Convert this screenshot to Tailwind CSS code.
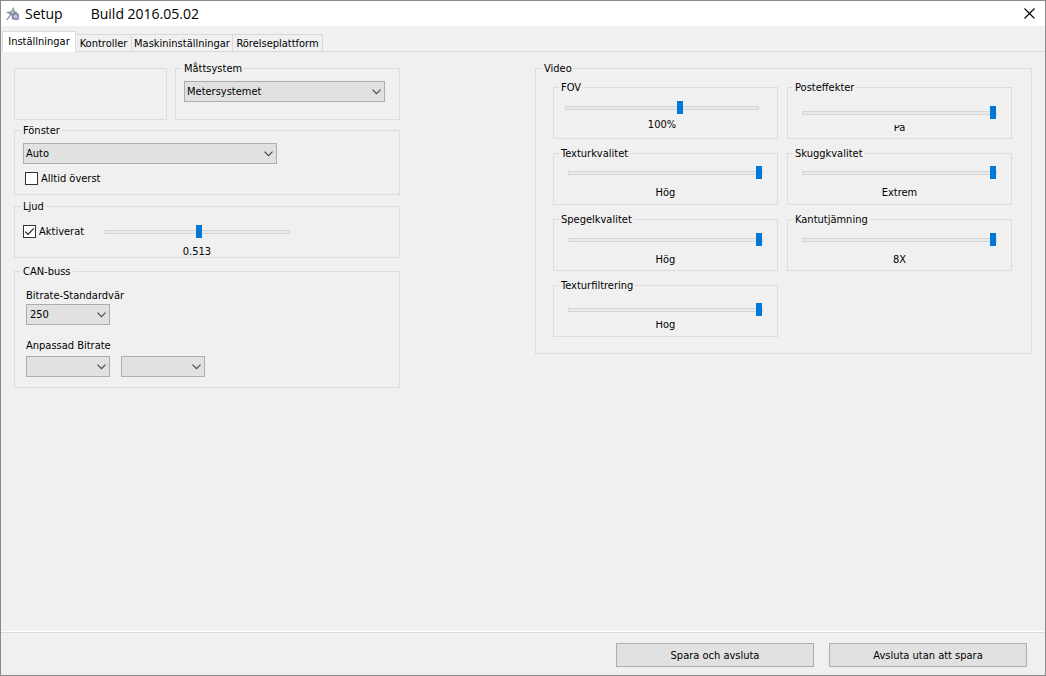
<!DOCTYPE html>
<html lang="sv">
<head>
<meta charset="utf-8">
<title>Setup</title>
<script src="https://cdn.jsdelivr.net/npm/@tailwindcss/browser@4"></script>
</head>
<body class="flex min-h-screen flex-col border border-[#8a8a8a] bg-[#f0f0f0] font-['DejaVu_Sans_Condensed','DejaVu_Sans',sans-serif] text-[11px] leading-[13px] text-black">
<svg class="hidden"><symbol id="chev" viewBox="0 0 9 6"><path d="M.5 .7 4.5 4.7 8.5 .7" fill="none" stroke="#444" stroke-width="1.1"/></symbol></svg>

<header class="flex h-[25px] items-center bg-white pl-1 pr-2 font-['Open_Sans',sans-serif] text-[14px] leading-5">
  <svg class="size-4" viewBox="0 0 16 16" fill="none" aria-hidden="true">
    <path d="M1 6 6.3 5.2 8.3.8 9.8 5.2 12.6 6 10.2 8 11.8 14 9.6 13 8.2 9.2 5.8 9.8 2 14.6 1.2 13.8 5 8.6z" fill="#8d919b"/>
    <path d="M7.6 3.8 6.8 7.8 8.6 7.4z" fill="#d5d8de"/>
    <circle cx="10.4" cy="10.4" r="2.7" fill="#c3cbe0" stroke="#7683a8" stroke-width="1.5"/>
    <path d="M12.3 12.3 14 13.8M6.5 11.5 8.2 13.2M12.8 8.4 13.8 7.8" stroke="#8a93aa" stroke-width="1.2"/>
  </svg>
  <h1 class="ml-1">Setup</h1>
  <span class="ml-7">Build 2016.05.02</span>
  <button aria-label="Stäng" class="ml-auto grid size-4 place-items-center"><svg class="size-[11px]" viewBox="0 0 11 11"><path d="M.5.5l10 10M10.5.5l-10 10" stroke="#000" stroke-width="1.1"/></svg></button>
</header>

<nav role="tablist" class="flex items-end pl-px pt-[5px]">
  <button role="tab" aria-selected="true" class="h-[21px] w-[74px] shrink-0 border-x border-t border-[#dcdcdc] bg-white pb-0.5 whitespace-nowrap">Inställningar</button>
  <button role="tab" class="h-[18px] w-14 shrink-0 border-y border-r border-[#d9d9d9] whitespace-nowrap">Kontroller</button>
  <button role="tab" class="h-[18px] w-[101px] shrink-0 border-y border-r border-[#d9d9d9] whitespace-nowrap">Maskininställningar</button>
  <button role="tab" class="h-[18px] w-[90px] shrink-0 border-y border-r border-[#d9d9d9] whitespace-nowrap">Rörelseplattform</button>
  <span class="grow border-b border-[#d9d9d9]"></span>
</nav>

<main class="flex grow items-start justify-between gap-4 pb-4 pl-[13px] pr-[13px] pt-[10px]">
  <div class="w-[386px] shrink-0">
    <div class="flex gap-2">
      <div class="mt-1.5 w-[153px] border border-[#dcdcdc]"></div>
      <fieldset class="h-[58px] grow border border-[#dcdcdc] px-2">
        <legend class="-ml-0.5 px-0.5"><label for="unit">Måttsystem</label></legend>
        <div class="relative mt-1.5 w-[201px]">
          <select id="unit" class="block h-[21px] w-full appearance-none border border-[#adadad] bg-[#e1e1e1] px-0.5"><option>Metersystemet</option></select>
          <svg class="pointer-events-none absolute right-1 top-2 h-1.5 w-[9px]"><use href="#chev"/></svg>
        </div>
      </fieldset>
    </div>

    <fieldset class="mt-1 h-[71px] border border-[#dcdcdc] px-2">
      <legend class="-ml-0.5 px-0.5"><label for="win">Fönster</label></legend>
      <div class="relative mt-1.5 w-[254px]">
        <select id="win" class="block h-[21px] w-full appearance-none border border-[#adadad] bg-[#e1e1e1] px-0.5"><option>Auto</option></select>
        <svg class="pointer-events-none absolute right-1 top-2 h-1.5 w-[9px]"><use href="#chev"/></svg>
      </div>
      <label class="ml-0.5 mt-2 flex items-center gap-[3px]"><input type="checkbox" class="size-[13px] appearance-none border border-[#333] bg-white">Alltid överst</label>
    </fieldset>

    <fieldset class="mt-[5px] h-[58px] border border-[#dcdcdc] px-2">
      <legend class="-ml-0.5 px-0.5">Ljud</legend>
      <div class="mt-3 flex">
        <label class="flex w-[81px] items-center gap-[3px] self-start">
          <span class="grid size-[13px] place-items-center">
            <input type="checkbox" checked class="col-start-1 row-start-1 size-[13px] appearance-none border border-[#333] bg-white">
            <svg class="pointer-events-none col-start-1 row-start-1 size-[11px]" viewBox="0 0 11 11"><path d="M1.2 5.6 4 8.4 9.8 2.4" fill="none" stroke="#222" stroke-width="1.2"/></svg>
          </span>Aktiverat</label>
        <div class="flex w-[186px] flex-col">
          <input id="vol" type="range" min="0" max="1000" value="513" aria-label="Ljudvolym" class="block h-[13px] w-full appearance-none bg-transparent [&::-webkit-slider-runnable-track]:h-1 [&::-webkit-slider-runnable-track]:border [&::-webkit-slider-runnable-track]:border-[#d6d6d6] [&::-webkit-slider-runnable-track]:bg-[#e7eaea] [&::-webkit-slider-thumb]:-mt-[6px] [&::-webkit-slider-thumb]:h-[13px] [&::-webkit-slider-thumb]:w-1.5 [&::-webkit-slider-thumb]:appearance-none [&::-webkit-slider-thumb]:bg-[#0078d7]">
          <output for="vol" class="mt-[7px] text-center">0.513</output>
        </div>
      </div>
    </fieldset>

    <fieldset class="mt-[7px] h-[123px] border border-[#dcdcdc] pl-[11px]">
      <legend class="-ml-[5px] px-0.5">CAN-buss</legend>
      <label for="rate" class="mt-[11px] block">Bitrate-Standardvär</label>
      <div class="relative mt-0.5 w-[84px]">
        <select id="rate" class="block h-[21px] w-full appearance-none border border-[#adadad] bg-[#e1e1e1] px-[3px]"><option>250</option></select>
        <svg class="pointer-events-none absolute right-1 top-2 h-1.5 w-[9px]"><use href="#chev"/></svg>
      </div>
      <label for="custom" class="mt-3.5 block">Anpassad Bitrate</label>
      <div class="mt-1 flex gap-[11px]">
        <div class="relative w-[84px]">
          <select id="custom" class="block h-[21px] w-full appearance-none border border-[#adadad] bg-[#e1e1e1]"><option></option></select>
          <svg class="pointer-events-none absolute right-1 top-2 h-1.5 w-[9px]"><use href="#chev"/></svg>
        </div>
        <div class="relative w-[84px]">
          <select aria-label="Anpassad Bitrate 2" class="block h-[21px] w-full appearance-none border border-[#adadad] bg-[#e1e1e1]"><option></option></select>
          <svg class="pointer-events-none absolute right-1 top-2 h-1.5 w-[9px]"><use href="#chev"/></svg>
        </div>
      </div>
    </fieldset>
  </div>

  <fieldset class="h-[292px] w-[497px] shrink-0 border border-[#dcdcdc] pl-[17px] pr-[19px]">
    <legend class="-ml-[11px] px-0.5">Video</legend>
    <div class="mt-1.5 grid grid-cols-2 gap-x-[9px] gap-y-2">
      <fieldset class="h-[58px] border border-[#dcdcdc] pl-[11px] pr-[18px]">
        <legend class="-ml-[6px] px-0.5"><label for="fov">FOV</label></legend>
        <input id="fov" type="range" min="0" max="1000" value="596" class="mt-[7px] block h-[13px] w-full appearance-none bg-transparent [&::-webkit-slider-runnable-track]:h-1 [&::-webkit-slider-runnable-track]:border [&::-webkit-slider-runnable-track]:border-[#d6d6d6] [&::-webkit-slider-runnable-track]:bg-[#e7eaea] [&::-webkit-slider-thumb]:-mt-[6px] [&::-webkit-slider-thumb]:h-[13px] [&::-webkit-slider-thumb]:w-1.5 [&::-webkit-slider-thumb]:appearance-none [&::-webkit-slider-thumb]:bg-[#0078d7]">
        <output for="fov" class="mt-1 block text-center">100%</output>
      </fieldset>

      <fieldset class="h-[58px] border border-[#dcdcdc] px-3.5">
        <legend class="-ml-[9px] px-0.5"><label for="post">Posteffekter</label></legend>
        <div class="relative z-10 mt-3 bg-[#f0f0f0] pb-1.5">
        <input id="post" type="range" min="0" max="1" value="1" class="block h-[13px] w-full appearance-none bg-transparent [&::-webkit-slider-runnable-track]:h-1 [&::-webkit-slider-runnable-track]:border [&::-webkit-slider-runnable-track]:border-[#d6d6d6] [&::-webkit-slider-runnable-track]:bg-[#e7eaea] [&::-webkit-slider-thumb]:-mt-[6px] [&::-webkit-slider-thumb]:h-[13px] [&::-webkit-slider-thumb]:w-1.5 [&::-webkit-slider-thumb]:appearance-none [&::-webkit-slider-thumb]:bg-[#0078d7]">
        </div>
        <output for="post" class="-mt-1 block text-center">På</output>
      </fieldset>

      <fieldset class="h-[58px] border border-[#dcdcdc] px-3.5">
        <legend class="-ml-[9px] px-0.5"><label for="tex">Texturkvalitet</label></legend>
        <input id="tex" type="range" min="0" max="2" value="2" class="mt-1.5 block h-[13px] w-full appearance-none bg-transparent [&::-webkit-slider-runnable-track]:h-1 [&::-webkit-slider-runnable-track]:border [&::-webkit-slider-runnable-track]:border-[#d6d6d6] [&::-webkit-slider-runnable-track]:bg-[#e7eaea] [&::-webkit-slider-thumb]:-mt-[6px] [&::-webkit-slider-thumb]:h-[13px] [&::-webkit-slider-thumb]:w-1.5 [&::-webkit-slider-thumb]:appearance-none [&::-webkit-slider-thumb]:bg-[#0078d7]">
        <output for="tex" class="mt-[7px] block text-center">Hög</output>
      </fieldset>

      <fieldset class="h-[58px] border border-[#dcdcdc] px-3.5">
        <legend class="-ml-[9px] px-0.5"><label for="shadow">Skuggkvalitet</label></legend>
        <input id="shadow" type="range" min="0" max="3" value="3" class="mt-1.5 block h-[13px] w-full appearance-none bg-transparent [&::-webkit-slider-runnable-track]:h-1 [&::-webkit-slider-runnable-track]:border [&::-webkit-slider-runnable-track]:border-[#d6d6d6] [&::-webkit-slider-runnable-track]:bg-[#e7eaea] [&::-webkit-slider-thumb]:-mt-[6px] [&::-webkit-slider-thumb]:h-[13px] [&::-webkit-slider-thumb]:w-1.5 [&::-webkit-slider-thumb]:appearance-none [&::-webkit-slider-thumb]:bg-[#0078d7]">
        <output for="shadow" class="mt-[7px] block text-center">Extrem</output>
      </fieldset>

      <fieldset class="h-[58px] border border-[#dcdcdc] px-3.5">
        <legend class="-ml-[9px] px-0.5"><label for="mirror">Spegelkvalitet</label></legend>
        <input id="mirror" type="range" min="0" max="2" value="2" class="mt-[7px] block h-[13px] w-full appearance-none bg-transparent [&::-webkit-slider-runnable-track]:h-1 [&::-webkit-slider-runnable-track]:border [&::-webkit-slider-runnable-track]:border-[#d6d6d6] [&::-webkit-slider-runnable-track]:bg-[#e7eaea] [&::-webkit-slider-thumb]:-mt-[6px] [&::-webkit-slider-thumb]:h-[13px] [&::-webkit-slider-thumb]:w-1.5 [&::-webkit-slider-thumb]:appearance-none [&::-webkit-slider-thumb]:bg-[#0078d7]">
        <output for="mirror" class="mt-[7px] block text-center">Hög</output>
      </fieldset>

      <fieldset class="h-[58px] border border-[#dcdcdc] px-3.5">
        <legend class="-ml-[9px] px-0.5"><label for="aa">Kantutjämning</label></legend>
        <input id="aa" type="range" min="0" max="3" value="3" class="mt-[7px] block h-[13px] w-full appearance-none bg-transparent [&::-webkit-slider-runnable-track]:h-1 [&::-webkit-slider-runnable-track]:border [&::-webkit-slider-runnable-track]:border-[#d6d6d6] [&::-webkit-slider-runnable-track]:bg-[#e7eaea] [&::-webkit-slider-thumb]:-mt-[6px] [&::-webkit-slider-thumb]:h-[13px] [&::-webkit-slider-thumb]:w-1.5 [&::-webkit-slider-thumb]:appearance-none [&::-webkit-slider-thumb]:bg-[#0078d7]">
        <output for="aa" class="mt-[7px] block text-center">8X</output>
      </fieldset>

      <fieldset class="h-[58px] border border-[#dcdcdc] px-3.5">
        <legend class="-ml-[9px] px-0.5"><label for="filter">Texturfiltrering</label></legend>
        <div class="relative z-10 mt-[11px] bg-[#f0f0f0] pb-[5px]">
        <input id="filter" type="range" min="0" max="2" value="2" class="block h-[13px] w-full appearance-none bg-transparent [&::-webkit-slider-runnable-track]:h-1 [&::-webkit-slider-runnable-track]:border [&::-webkit-slider-runnable-track]:border-[#d6d6d6] [&::-webkit-slider-runnable-track]:bg-[#e7eaea] [&::-webkit-slider-thumb]:-mt-[6px] [&::-webkit-slider-thumb]:h-[13px] [&::-webkit-slider-thumb]:w-1.5 [&::-webkit-slider-thumb]:appearance-none [&::-webkit-slider-thumb]:bg-[#0078d7]">
        </div>
        <output for="filter" class="-mt-[3px] block text-center">Hög</output>
      </fieldset>
    </div>
  </fieldset>
</main>

<footer class="flex justify-end gap-[15px] border-t border-[#d9d9d9] pb-2 pr-[18px] pt-2.5 shadow-[0_-1px_0_#fff]">
  <button class="h-6 w-[198px] border border-[#adadad] bg-[#e1e1e1]">Spara och avsluta</button>
  <button class="h-6 w-[198px] border border-[#adadad] bg-[#e1e1e1]">Avsluta utan att spara</button>
</footer>
</body>
</html>
